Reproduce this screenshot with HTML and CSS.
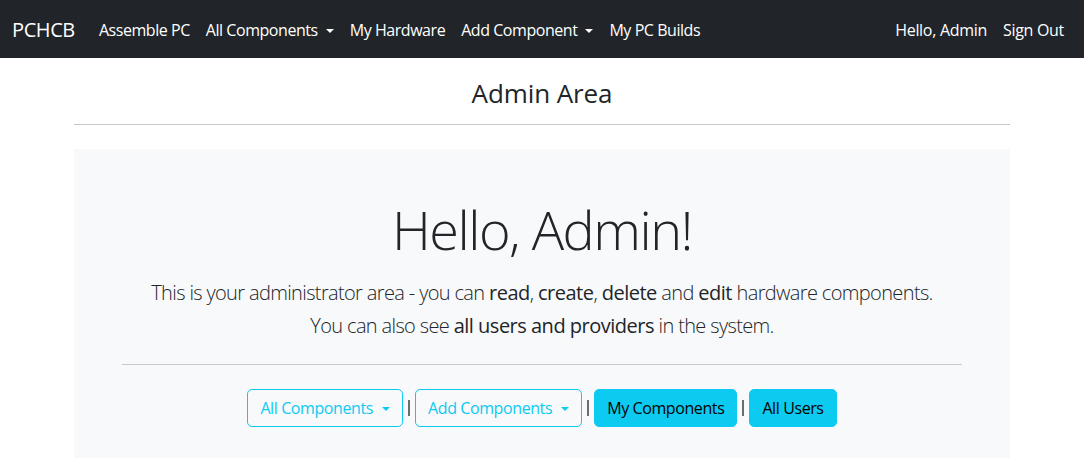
FILE: index.html
```html
<!DOCTYPE html>
<html lang="en">
<head>
<meta charset="utf-8">
<title>Admin Area - PCHCB</title>
<link rel="stylesheet" href="styles.css">
</head>
<body>
<nav class="navbar">
  <div class="nav-left">
    <a class="brand" href="#">PCHCB</a>
    <a class="nav-link" href="#">Assemble PC</a>
    <a class="nav-link toggle" href="#">All Components</a>
    <a class="nav-link" href="#">My Hardware</a>
    <a class="nav-link toggle" href="#">Add Component</a>
    <a class="nav-link" href="#">My PC Builds</a>
  </div>
  <div class="nav-right">
    <a class="nav-link" href="#">Hello, Admin</a>
    <a class="nav-link" href="#">Sign Out</a>
  </div>
</nav>
<main class="container">
  <h3 class="page-title">Admin Area</h3>
  <hr class="title-rule">
  <section class="panel">
    <h1 class="display">Hello, Admin!</h1>
    <p class="lead">This is your administrator area - you can <b>read</b>, <b>create</b>, <b>delete</b> and <b>edit</b> hardware components.<br>You can also see <b>all users and providers</b> in the system.</p>
    <hr class="panel-rule">
    <div class="actions">
      <button class="btn btn-outline toggle">All Components</button>
      <span class="sep"></span>
      <button class="btn btn-outline toggle">Add Components</button>
      <span class="sep"></span>
      <button class="btn btn-solid">My Components</button>
      <span class="sep"></span>
      <button class="btn btn-solid">All Users</button>
    </div>
  </section>
</main>
</body>
</html>
```
FILE: styles.css
```css
* { box-sizing: border-box; }
html, body { margin: 0; padding: 0; }
body {
  font-family: "Open Sans", "Noto Sans", sans-serif;
  font-size: 16px;
  line-height: 1.5;
  color: #212529;
  background: #fff;
  overflow: hidden;
}
a { text-decoration: none; }

.navbar {
  height: 58px;
  background: #212529;
  display: flex;
  align-items: center;
  justify-content: space-between;
  padding: 2px 12px 0;
}
.nav-left, .nav-right { display: flex; align-items: center; }
.brand {
  color: #fff;
  font-size: 20px;
  margin-right: 16px;
  letter-spacing: -0.4px;
}
.nav-link {
  color: #fff;
  padding: 8px 8px;
  font-size: 16px;
  letter-spacing: -0.45px;
}
.nav-right .nav-link { letter-spacing: -0.3px; }
.toggle::after {
  content: "";
  display: inline-block;
  margin-left: 8px;
  vertical-align: 3px;
  border-top: 4px solid;
  border-right: 4px solid transparent;
  border-left: 4px solid transparent;
}

.container {
  width: 936px;
  margin: 0 auto;
}
.page-title {
  margin: 0;
  padding-top: 20px;
  text-align: center;
  font-size: 26px;
  font-weight: 400;
  line-height: 1.2;
  letter-spacing: -0.1px;
}
.title-rule {
  border: 0;
  border-top: 1px solid #c8c9ca;
  margin: 15px 0 24px;
}
.panel {
  background: #f8f9fa;
  padding: 48px 48px 60px;
  text-align: center;
}
.display {
  margin: 0 0 14px;
  font-size: 54px;
  font-weight: 300;
  line-height: 1.2;
  letter-spacing: -1.5px;
}
.lead {
  margin: 0;
  font-size: 20px;
  font-weight: 300;
  line-height: 33px;
  letter-spacing: -0.64px;
}
.lead b { font-weight: 500; letter-spacing: -0.5px; }
.panel-rule {
  border: 0;
  border-top: 1px solid #c8c9ca;
  margin: 22px 0 24px;
}
.actions {
  display: flex;
  justify-content: center;
  align-items: center;
}
.sep {
  display: inline-block;
  width: 2px;
  height: 16px;
  margin: 0 5px;
  background: #6a6d70;
}
.btn {
  font-family: inherit;
  font-size: 16px;
  line-height: 24px;
  height: 38px;
  padding: 6px 12px;
  border-radius: 5px;
  border: 1px solid #0dcaf0;
  letter-spacing: -0.4px;
  cursor: pointer;
}
.btn.toggle::after { margin-left: 9px; }
.btn-outline { background: transparent; color: #0dcaf0; }
.btn-solid { background: #0dcaf0; color: #000; }
```
